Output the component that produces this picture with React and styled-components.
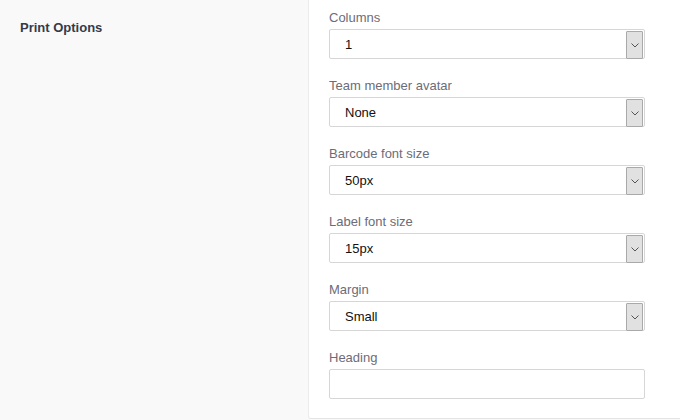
import styled, { createGlobalStyle } from "styled-components";

const GlobalStyle = createGlobalStyle`
  html, body {
    margin: 0;
    padding: 0;
    background: #f9f9f9;
    font-family: "Liberation Sans", Arial, sans-serif;
  }
`;

const Page = styled.div`
  display: flex;
  width: 680px;
  height: 420px;
  background: #f9f9f9;
`;

const Sidebar = styled.div`
  width: 308px;
  padding: 20px 20px;
  box-sizing: border-box;
`;

const SectionTitle = styled.h2`
  margin: 0;
  font-size: 13px;
  line-height: 16px;
  font-weight: bold;
  color: #353a4a;
`;

const Panel = styled.div`
  flex: 1;
  align-self: flex-start;
  display: flex;
  flex-direction: column;
  gap: 19px;
  padding: 10px 35px 19px 20px;
  background: #fff;
  border-left: 1px solid #ececec;
  border-bottom: 1px solid #e4e4e4;
  border-bottom-left-radius: 3px;
`;

const Field = styled.div`
  display: flex;
  flex-direction: column;
  gap: 3px;
`;

const Label = styled.label`
  font-size: 13px;
  line-height: 16px;
  color: #6c6c78;
`;

const SelectBox = styled.div`
  position: relative;
  height: 30px;
  box-sizing: border-box;
  display: flex;
  align-items: center;
  padding-left: 15px;
  border: 1px solid #d6d6d6;
  border-radius: 2px;
  background: #fff;
  font-size: 13px;
  color: #111;
`;

const ArrowButton = styled.span`
  position: absolute;
  top: 1px;
  right: 1px;
  width: 15px;
  height: 26px;
  display: flex;
  align-items: center;
  justify-content: center;
  background: #e1e1e1;
  border: 1px solid #a9a9a9;
  border-radius: 1px;
`;

const TextBox = styled.div`
  height: 30px;
  box-sizing: border-box;
  border: 1px solid #d6d6d6;
  border-radius: 2px;
  background: #fff;
`;

const Chevron = () => (
  <svg width="8" height="5" viewBox="0 0 8 5">
    <path d="M0.5 0.5 L4 4 L7.5 0.5" fill="none" stroke="#555" strokeWidth="1" />
  </svg>
);

const options = [
  { label: "Columns", value: "1" },
  { label: "Team member avatar", value: "None" },
  { label: "Barcode font size", value: "50px" },
  { label: "Label font size", value: "15px" },
  { label: "Margin", value: "Small" },
];

const App = () => {
  return (
    <Page>
      <GlobalStyle />
      <Sidebar>
        <SectionTitle>Print Options</SectionTitle>
      </Sidebar>
      <Panel>
        {options.map((opt) => (
          <Field key={opt.label}>
            <Label>{opt.label}</Label>
            <SelectBox>
              {opt.value}
              <ArrowButton>
                <Chevron />
              </ArrowButton>
            </SelectBox>
          </Field>
        ))}
        <Field>
          <Label>Heading</Label>
          <TextBox />
        </Field>
      </Panel>
    </Page>
  );
};

export default App;
